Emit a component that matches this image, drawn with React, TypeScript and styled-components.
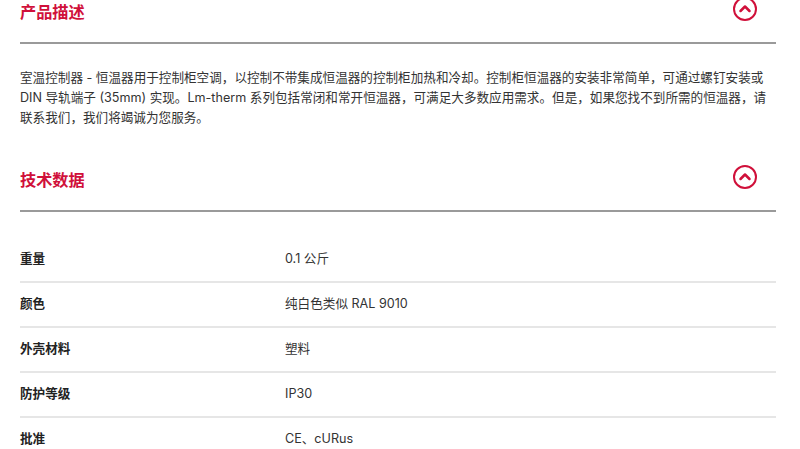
import styled, { createGlobalStyle } from "styled-components";

const GlobalStyle = createGlobalStyle`
  html, body {
    margin: 0;
    padding: 0;
    background: #fff;
    overflow: hidden;
  }
  body {
    font-family: Inter, "Noto Sans CJK SC", sans-serif;
    color: #333;
  }
`;

const Page = styled.div`
  margin-top: -17px;
  padding: 0 24px 0 20px;
`;

const Section = styled.section``;

const SectionHeader = styled.div`
  display: flex;
  align-items: center;
  justify-content: space-between;
  padding: 14px 0 21px;
  border-bottom: 2px solid #9a9a9a;
`;

const Title = styled.h2`
  margin: 3px 0 -3px;
  font-size: 16.2px;
  line-height: 24px;
  font-weight: 700;
  color: #d0103a;
`;

const ToggleButton = styled.button`
  display: flex;
  align-items: center;
  justify-content: center;
  width: 24px;
  height: 24px;
  margin-right: 19px;
  padding: 0;
  border: 0;
  background: none;
  cursor: pointer;
`;

const Description = styled.p`
  margin: 0;
  padding: 24px 0;
  font-size: 12.6px;
  line-height: 19.8px;
  color: #333;
`;

const SpecTable = styled.div`
  margin-top: 26px;
`;

const SpecRow = styled.div`
  display: grid;
  grid-template-columns: 265px 1fr;
  padding: 11px 0 12px;
  font-size: 12.6px;
  line-height: 20px;
  border-bottom: 2px solid #e6e6e6;
`;

const SpecLabel = styled.div`
  font-weight: 700;
  color: #222;
`;

const SpecValue = styled.div`
  color: #333;
`;

function ChevronCircle() {
  return (
    <svg width="24" height="24" viewBox="0 0 24 24" fill="none">
      <circle cx="12" cy="12" r="11" stroke="#d0103a" strokeWidth="2" />
      <path
        d="M7.5 14 L12 9.5 L16.5 14"
        stroke="#d0103a"
        strokeWidth="2.5"
        strokeLinecap="round"
        strokeLinejoin="round"
      />
    </svg>
  );
}

const specs = [
  { label: "重量", value: "0.1 公斤" },
  { label: "颜色", value: "纯白色类似 RAL 9010" },
  { label: "外壳材料", value: "塑料" },
  { label: "防护等级", value: "IP30" },
  { label: "批准", value: "CE、cURus" },
];

export default function App() {
  return (
    <>
      <GlobalStyle />
      <Page>
        <Section>
          <SectionHeader>
            <Title>产品描述</Title>
            <ToggleButton aria-label="收起">
              <ChevronCircle />
            </ToggleButton>
          </SectionHeader>
          <Description>
            室温控制器 - 恒温器用于控制柜空调，以控制不带集成恒温器的控制柜加热和冷却。控制柜恒温器的安装非常简单，可通过螺钉安装或
            DIN 导轨端子 (35mm) 实现。Lm-therm
            系列包括常闭和常开恒温器，可满足大多数应用需求。但是，如果您找不到所需的恒温器，请联系我们，我们将竭诚为您服务。
          </Description>
        </Section>
        <Section>
          <SectionHeader>
            <Title>技术数据</Title>
            <ToggleButton aria-label="收起">
              <ChevronCircle />
            </ToggleButton>
          </SectionHeader>
          <SpecTable>
            {specs.map((spec) => (
              <SpecRow key={spec.label}>
                <SpecLabel>{spec.label}</SpecLabel>
                <SpecValue>{spec.value}</SpecValue>
              </SpecRow>
            ))}
          </SpecTable>
        </Section>
      </Page>
    </>
  );
}
